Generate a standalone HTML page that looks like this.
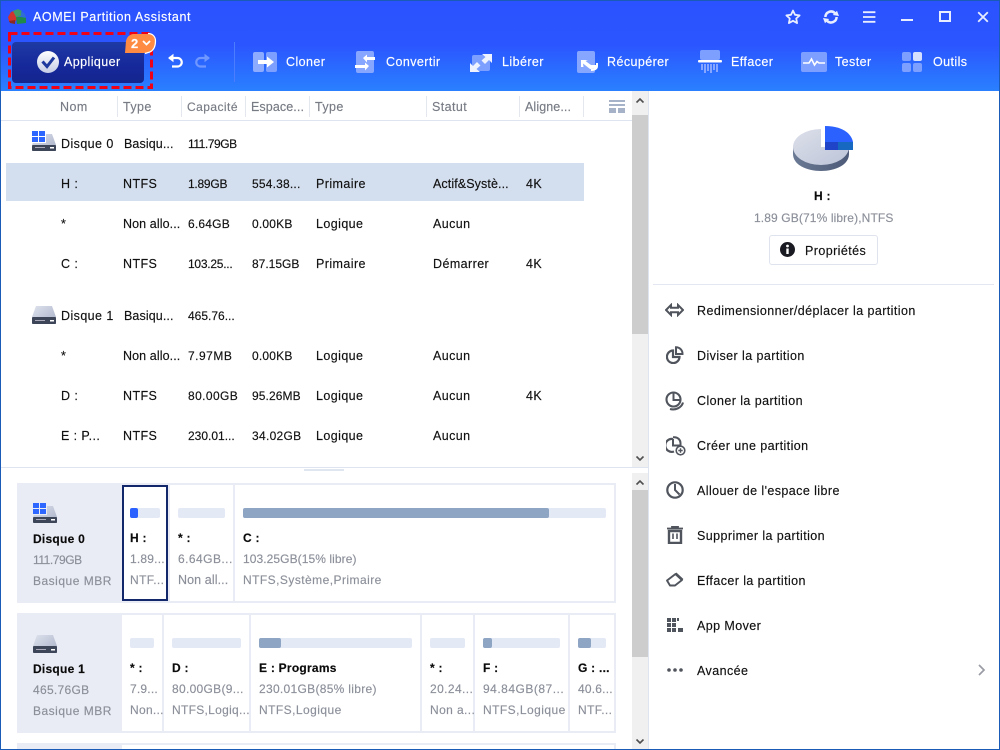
<!DOCTYPE html>
<html lang="fr"><head><meta charset="utf-8"><title>AOMEI Partition Assistant</title>
<style>
*{box-sizing:border-box}
html,body{margin:0;padding:0}
body{width:1000px;height:750px;overflow:hidden;position:relative;background:#fff;font-family:"Liberation Sans",sans-serif;font-size:12.5px;letter-spacing:.42px;color:#111;-webkit-text-stroke:.15px currentColor}
.a,.t,.b,.f,svg{position:absolute}
.t{white-space:nowrap;line-height:16px;height:16px}
.w{color:#fff}
.g{color:#8b8f99}
.h{color:#777b84}
.n{font-weight:bold;color:#0a0a0a;font-size:12px;letter-spacing:.25px}
.d{font-size:12px;letter-spacing:.2px}
.o{font-size:12px;letter-spacing:-.25px}
.e{letter-spacing:.1px}
.sep{position:absolute;top:96px;width:1px;height:21px;background:#e4e7ee}
.b{height:10px;background:#e3e9f5;border-radius:2px}
.f{height:10px;background:#8fa5c4;border-radius:2px}
.c{position:absolute;background:#fff}
.m{left:697px;color:#111}
</style></head><body>

<div class="a" style="left:0;top:0;width:1000px;height:91px;background:linear-gradient(#2b52ff 0,#2b56ff 50%,#2a80ff 100%)"></div>

<!-- logo -->
<svg style="left:7px;top:8px" width="20" height="18" viewBox="0 0 20 18"><path d="M1 9 4 4 9 2 11 9 8 14 2 13Z" fill="#d0342f"/><path d="M6 3 11 1 15 3 15 8 9 9Z" fill="#3f9a6a"/><path d="M9 9H19V15L10 16Z" fill="#1f8a4a"/><path d="M14 3 18 6 19 10 14 9Z" fill="#2e6fd0"/><path d="M2 13 8 12 8 16 3 15Z" fill="#8a2a20"/></svg>
<div class="t w" style="left:33px;top:9px;font-size:12.5px;letter-spacing:.6px">AOMEI Partition Assistant</div>

<!-- window controls -->
<svg style="left:785px;top:9px" width="16" height="16" viewBox="0 0 16 16"><path d="M8 1.600 10 5.800 14.600 6.400 11.200 9.500 12.100 14.100 8 11.800 3.900 14.100 4.800 9.500 1.400 6.400 6 5.800Z" fill="none" stroke="#e8eeff" stroke-width="1.800" stroke-linejoin="round"/></svg>
<svg style="left:823px;top:9px" width="16" height="16" viewBox="0 0 16 16"><path d="M2.400 8A5.600 5.600 0 0 1 12 4.200M13.600 8A5.600 5.600 0 0 1 4 11.800" fill="none" stroke="#e8eeff" stroke-width="2.500"/><path d="M9.800 6 16 7 14 1.800ZM6.200 10 0 9 2 14.200Z" fill="#e8eeff"/></svg>
<svg style="left:863px;top:11px" width="13" height="12" viewBox="0 0 13 12"><path d="M0 1.200H12.400M0 6H12.400M0 10.800H12.400" stroke="#e8eeff" stroke-width="1.800"/></svg>
<div class="a" style="left:901px;top:19px;width:12px;height:2px;background:#e8eeff"></div>
<div class="a" style="left:939px;top:11px;width:12px;height:11px;border:2px solid #e8eeff"></div>
<svg style="left:977px;top:11px" width="12" height="12" viewBox="0 0 12 12"><path d="M1.200 1.200 10.800 10.800M10.800 1.200 1.200 10.800" stroke="#e8eeff" stroke-width="1.800"/></svg>

<!-- apply -->
<div class="a" style="left:12px;top:42px;width:132px;height:41px;border-radius:4px;background:linear-gradient(#1e3aa4,#16289a 60%,#14258e)"></div>
<svg style="left:7px;top:31px" width="147" height="59" viewBox="0 0 147 59"><rect x="2.500" y="2.500" width="142" height="54" fill="none" stroke="#f00216" stroke-width="3" stroke-dasharray="8 4"/></svg>
<svg style="left:124px;top:32px" width="33" height="23" viewBox="0 0 33 23"><path d="M1 21 2 9C3 5 5 3 9 2H24C29 2 31 5 31 9 31 14 30 17 27 19L22 21Z" fill="#ff8b43" stroke="none"/><path d="M24 1.500C29 1.500 31.500 5 31.500 9 31.500 14 30 18 26 20L21 21.500" fill="none" stroke="#fff" stroke-width="1.200"/></svg>
<div class="t w" style="left:131px;top:36px;font-weight:bold;font-size:13px">2</div>
<svg style="left:142px;top:40px" width="9" height="6" viewBox="0 0 9 6"><path d="M1 1 4.500 4.500 8 1" fill="none" stroke="#fff" stroke-width="1.800"/></svg>
<svg style="left:36px;top:50px" width="24" height="24" viewBox="0 0 24 24"><defs><linearGradient id="ck" x1="0" y1="0" x2="0" y2="1"><stop offset="0" stop-color="#fff"/><stop offset="1" stop-color="#c5cde6"/></linearGradient></defs><circle cx="12" cy="12" r="11" fill="url(#ck)"/><path d="M6.500 11.500 11 16.500 18 7.500" fill="none" stroke="#1f3a9e" stroke-width="3"/></svg>
<div class="t w" style="left:64px;top:54px">Appliquer</div>

<!-- undo/redo -->
<svg style="left:167px;top:53px" width="18" height="16" viewBox="0 0 18 16"><path d="M2 5H10.500A4 4 0 0 1 10.500 13.500H5" fill="none" stroke="#fff" stroke-width="2.200"/><path d="M6.500 .8 1 5 6.500 9.200Z" fill="#fff"/></svg>
<svg style="left:193px;top:53px" width="18" height="16" viewBox="0 0 18 16"><path d="M16 5H7.500A4 4 0 0 0 7.500 13.500H13" fill="none" stroke="#6f97ff" stroke-width="2.200"/><path d="M11.500 .8 17 5 11.500 9.200Z" fill="#6f97ff"/></svg>
<div class="a" style="left:234px;top:42px;width:1px;height:40px;background:#4d7dff"></div>

<!-- toolbar icons -->
<svg style="left:253px;top:52px" width="24" height="20" viewBox="0 0 24 20"><rect width="11" height="20" rx="2" fill="#8dabff"/><rect x="13" width="11" height="20" rx="2" fill="#7d9fff"/><path d="M5 8H14V4.500L21 10 14 15.500V12H5Z" fill="#fff"/></svg>
<div class="t w" style="left:286px;top:54px">Cloner</div>
<svg style="left:355px;top:51px" width="22" height="22" viewBox="0 0 22 22"><rect x="1" y="0" width="18" height="22" rx="2" fill="#86a6ff"/><path d="M8 7 12 3.500V6H20V9H12V11.500ZM14 15 10 11.500V14H0V17H10V19.500Z" fill="#fff"/></svg>
<div class="t w" style="left:386px;top:54px">Convertir</div>
<svg style="left:470px;top:53px" width="22" height="20" viewBox="0 0 22 20"><rect x="2" y="2" width="18" height="16" rx="2" fill="#7d9fff"/><path d="M12 1H22V10L19 7 15 11 11.500 7.500 15.500 4ZM10 19H0V10L3 13 7 9 10.500 12.500 6.500 16Z" fill="#eef3ff"/></svg>
<div class="t w" style="left:502px;top:54px">Libérer</div>
<svg style="left:577px;top:51px" width="22" height="22" viewBox="0 0 22 22"><rect width="18" height="22" rx="2" fill="#86a6ff"/><path d="M4 9V16H6.500L6 12.500 13 18 20 17.500 21 14 14 14 8.500 10 11 9Z" fill="#fff"/><path d="M20 12V15C20 18 17 19 14 19" fill="none" stroke="#fff" stroke-width="2"/></svg>
<div class="t w" style="left:607px;top:54px">Récupérer</div>
<svg style="left:698px;top:50px" width="24" height="24" viewBox="0 0 24 24"><rect x="2" y="0" width="20" height="10" rx="2" fill="#7d9fff"/><rect x="0" y="10" width="24" height="2.500" rx="1" fill="#fff"/><path d="M4 14V20M7 14V23M10 14V21M13 14V23M16 14V20M19 14V22" stroke="#86a6ff" stroke-width="2"/></svg>
<div class="t w" style="left:731px;top:54px">Effacer</div>
<svg style="left:801px;top:52px" width="26" height="20" viewBox="0 0 26 20"><rect width="26" height="20" rx="2" fill="#7d9fff"/><path d="M2 11H8L10.500 7 13.500 13 16 9.500 18 11H24" fill="none" stroke="#fff" stroke-width="1.600"/></svg>
<div class="t w" style="left:835px;top:54px">Tester</div>
<svg style="left:902px;top:52px" width="20" height="20" viewBox="0 0 20 20"><rect width="9" height="9" rx="2" fill="#7d9fff"/><rect x="11" width="9" height="9" rx="2" fill="#d5e0ff"/><rect y="11" width="9" height="9" rx="2" fill="#7d9fff"/><rect x="11" y="11" width="9" height="9" rx="2" fill="#7d9fff"/></svg>
<div class="t w" style="left:933px;top:54px">Outils</div>

<!-- window border -->
<div class="a" style="left:0;top:0;width:1px;height:750px;background:#1a5bb8;z-index:9"></div>
<div class="a" style="left:999px;top:0;width:1px;height:750px;background:#1a5bb8;z-index:9"></div>
<div class="a" style="left:0;top:0;width:1000px;height:1px;background:#1a5bb8;z-index:9"></div>
<div class="a" style="left:0;top:749px;width:1000px;height:1px;background:#1a5bb8;z-index:9"></div>

<!-- list header -->
<div class="t h" style="left:60px;top:99px">Nom</div>
<div class="t h" style="left:123px;top:99px">Type</div>
<div class="t h" style="left:187px;top:99px;font-size:12px;letter-spacing:.45px">Capacité</div>
<div class="t h e" style="left:251px;top:99px">Espace...</div>
<div class="t h" style="left:315px;top:99px">Type</div>
<div class="t h" style="left:432px;top:99px">Statut</div>
<div class="t h e" style="left:525px;top:99px">Aligne...</div>
<div class="sep" style="left:117px"></div><div class="sep" style="left:181px"></div><div class="sep" style="left:245px"></div><div class="sep" style="left:309px"></div><div class="sep" style="left:426px"></div><div class="sep" style="left:519px"></div><div class="sep" style="left:583px"></div>
<div class="a" style="left:1px;top:120px;width:631px;height:1px;background:#dfe5f0"></div>
<svg style="left:609px;top:100px" width="16" height="13" viewBox="0 0 16 13"><path d="M0 0H16V2H0ZM0 4H16V6H0Z" fill="#a5b2c8"/><path d="M0 8H7V13H0ZM9 8H16V13H9Z" fill="#a5b2c8"/></svg>

<!-- rows -->
<div class="a" style="left:6px;top:163px;width:578px;height:38px;background:#d3deee"></div>

<svg style="left:32px;top:131px" width="24" height="20" viewBox="0 0 24 20"><defs><linearGradient id="dk" x1="0" y1="0" x2="1" y2="1"><stop offset="0" stop-color="#dfe3ee"/><stop offset="1" stop-color="#a8b0c6"/></linearGradient></defs><path d="M4 3H20L24 14V20H0V14Z" fill="url(#dk)"/><rect y="14" width="24" height="6" rx="1" fill="#3d4658"/><rect x="3" y="16" width="10" height="1" fill="#aab"/><rect x="18" y="16" width="4" height="1.500" fill="#fff"/><rect x="0" y="0" width="14" height="12" fill="#fff"/><path d="M0 0H6V5H0ZM7 0H13V5H7ZM0 6H6V11H0ZM7 6H13V11H7Z" fill="#2e67ff"/></svg>
<div class="t" style="left:61px;top:136px">Disque 0</div><div class="t e" style="left:124px;top:136px">Basiqu...</div><div class="t o" style="left:188px;top:136px;letter-spacing:-.45px">111.79GB</div>

<div class="t" style="left:61px;top:176px">H :</div><div class="t" style="left:123px;top:176px">NTFS</div><div class="t o" style="left:188px;top:176px">1.89GB</div><div class="t d" style="left:252px;top:176px">554.38...</div><div class="t" style="left:316px;top:176px">Primaire</div><div class="t e" style="left:433px;top:176px">Actif&amp;Systè...</div><div class="t" style="left:526px;top:176px">4K</div>

<div class="t" style="left:61px;top:216px">*</div><div class="t e" style="left:123px;top:216px">Non allo...</div><div class="t d" style="left:188px;top:216px">6.64GB</div><div class="t d" style="left:252px;top:216px">0.00KB</div><div class="t" style="left:316px;top:216px">Logique</div><div class="t" style="left:433px;top:216px">Aucun</div>

<div class="t" style="left:61px;top:256px">C :</div><div class="t" style="left:123px;top:256px">NTFS</div><div class="t o" style="left:188px;top:256px">103.25...</div><div class="t d" style="left:252px;top:256px;letter-spacing:0">87.15GB</div><div class="t" style="left:316px;top:256px">Primaire</div><div class="t" style="left:433px;top:256px">Démarrer</div><div class="t" style="left:526px;top:256px">4K</div>

<svg style="left:32px;top:306px" width="24" height="18" viewBox="0 0 24 18"><path d="M4 0H20L24 11V18H0V11Z" fill="url(#dk)"/><rect y="11" width="24" height="7" rx="1" fill="#3d4658"/><rect x="3" y="14" width="10" height="1" fill="#aab"/><rect x="18" y="14" width="4" height="1.500" fill="#fff"/></svg>
<div class="t" style="left:61px;top:308px">Disque 1</div><div class="t e" style="left:124px;top:308px">Basiqu...</div><div class="t d" style="left:188px;top:308px;letter-spacing:0">465.76...</div>

<div class="t" style="left:61px;top:348px">*</div><div class="t e" style="left:123px;top:348px">Non allo...</div><div class="t d" style="left:188px;top:348px;letter-spacing:.5px">7.97MB</div><div class="t d" style="left:252px;top:348px">0.00KB</div><div class="t" style="left:316px;top:348px">Logique</div><div class="t" style="left:433px;top:348px">Aucun</div>

<div class="t" style="left:61px;top:388px">D :</div><div class="t" style="left:123px;top:388px">NTFS</div><div class="t d" style="left:188px;top:388px;letter-spacing:.4px">80.00GB</div><div class="t d" style="left:252px;top:388px;letter-spacing:.1px">95.26MB</div><div class="t" style="left:316px;top:388px">Logique</div><div class="t" style="left:433px;top:388px">Aucun</div><div class="t" style="left:526px;top:388px">4K</div>

<div class="t" style="left:61px;top:428px">E : P...</div><div class="t" style="left:123px;top:428px">NTFS</div><div class="t d" style="left:188px;top:428px;letter-spacing:0">230.01...</div><div class="t d" style="left:252px;top:428px;letter-spacing:.3px">34.02GB</div><div class="t" style="left:316px;top:428px">Logique</div><div class="t" style="left:433px;top:428px">Aucun</div>

<!-- upper scrollbar -->
<div class="a" style="left:632px;top:91px;width:16px;height:376px;background:#f0f0f0"></div>
<div class="a" style="left:632px;top:115px;width:16px;height:219px;background:#cdcdcd"></div>
<svg style="left:635px;top:97px" width="10" height="7" viewBox="0 0 10 7"><path d="M1.500 5.500 5 2 8.500 5.500" fill="none" stroke="#505050" stroke-width="1.600"/></svg>
<svg style="left:635px;top:455px" width="10" height="7" viewBox="0 0 10 7"><path d="M1.500 1.500 5 5 8.500 1.500" fill="none" stroke="#505050" stroke-width="1.600"/></svg>
<div class="a" style="left:648px;top:91px;width:1px;height:659px;background:#dfe5f0"></div>

<!-- splitter -->
<div class="a" style="left:1px;top:467px;width:647px;height:1px;background:#dfe5f0"></div>
<div class="a" style="left:304px;top:469px;width:40px;height:2px;background:#dfe6f0"></div>

<!-- disk 0 card -->
<div class="a" style="left:17px;top:483px;width:599px;height:120px;background:#e9ecf4"></div>
<div class="c" style="left:122px;top:485px;width:46px;height:116px;border:2px solid #12286b"></div>
<div class="c" style="left:170px;top:485px;width:63px;height:116px"></div>
<div class="c" style="left:235px;top:485px;width:379px;height:116px"></div>
<svg style="left:33px;top:503px" width="24" height="20" viewBox="0 0 24 20"><path d="M4 3H20L24 14V20H0V14Z" fill="url(#dk)"/><rect y="14" width="24" height="6" rx="1" fill="#3d4658"/><rect x="3" y="16" width="10" height="1" fill="#aab"/><rect x="18" y="16" width="4" height="1.500" fill="#fff"/><rect x="0" y="0" width="14" height="12" fill="#e9ecf4"/><path d="M0 0H6V5H0ZM7 0H13V5H7ZM0 6H6V11H0ZM7 6H13V11H7Z" fill="#2e67ff"/></svg>
<div class="t n" style="left:33px;top:531px">Disque 0</div>
<div class="t g o" style="left:33px;top:552px;letter-spacing:-.45px">111.79GB</div>
<div class="t g" style="left:33px;top:573px;font-size:12px;letter-spacing:.5px">Basique MBR</div>
<div class="b" style="left:130px;top:508px;width:30px"></div><div class="f" style="left:130px;top:508px;width:8px;background:#2b62ff"></div>
<div class="t n" style="left:130px;top:530px">H :</div><div class="t g d" style="left:130px;top:551px">1.89...</div><div class="t g" style="left:130px;top:572px;font-size:12px;letter-spacing:.4px">NTF...</div>
<div class="b" style="left:178px;top:508px;width:47px"></div>
<div class="t n" style="left:178px;top:530px">* :</div><div class="t g d" style="left:178px;top:551px;letter-spacing:.45px">6.64GB...</div><div class="t g e" style="left:178px;top:572px">Non all...</div>
<div class="b" style="left:243px;top:508px;width:363px"></div><div class="f" style="left:243px;top:508px;width:306px"></div>
<div class="t n" style="left:243px;top:530px">C :</div><div class="t g d" style="left:243px;top:551px;letter-spacing:.08px">103.25GB(15% libre)</div><div class="t g" style="left:243px;top:572px;font-size:12px;letter-spacing:.45px">NTFS,Système,Primaire</div>

<!-- disk 1 card -->
<div class="a" style="left:17px;top:613px;width:599px;height:120px;background:#e9ecf4"></div>
<div class="c" style="left:122px;top:615px;width:40px;height:116px"></div>
<div class="c" style="left:164px;top:615px;width:85px;height:116px"></div>
<div class="c" style="left:251px;top:615px;width:169px;height:116px"></div>
<div class="c" style="left:422px;top:615px;width:51px;height:116px"></div>
<div class="c" style="left:475px;top:615px;width:93px;height:116px"></div>
<div class="c" style="left:570px;top:615px;width:44px;height:116px"></div>
<svg style="left:33px;top:635px" width="24" height="18" viewBox="0 0 24 18"><path d="M4 0H20L24 11V18H0V11Z" fill="url(#dk)"/><rect y="11" width="24" height="7" rx="1" fill="#3d4658"/><rect x="3" y="14" width="10" height="1" fill="#aab"/><rect x="18" y="14" width="4" height="1.500" fill="#fff"/></svg>
<div class="t n" style="left:33px;top:661px">Disque 1</div>
<div class="t g d" style="left:33px;top:682px;letter-spacing:.3px">465.76GB</div>
<div class="t g" style="left:33px;top:703px;font-size:12px;letter-spacing:.5px">Basique MBR</div>
<div class="b" style="left:130px;top:638px;width:24px"></div>
<div class="t n" style="left:130px;top:660px">* :</div><div class="t g d" style="left:130px;top:681px">7.9...</div><div class="t g" style="left:130px;top:702px;font-size:12px;letter-spacing:.3px">Non...</div>
<div class="b" style="left:172px;top:638px;width:69px"></div>
<div class="t n" style="left:172px;top:660px">D :</div><div class="t g d" style="left:172px;top:681px;letter-spacing:.3px">80.00GB(9...</div><div class="t g" style="left:172px;top:702px;font-size:12px;letter-spacing:.3px">NTFS,Logiq...</div>
<div class="b" style="left:259px;top:638px;width:153px"></div><div class="f" style="left:259px;top:638px;width:22px"></div>
<div class="t n" style="left:259px;top:660px">E : Programs</div><div class="t g d" style="left:259px;top:681px;letter-spacing:.3px">230.01GB(85% libre)</div><div class="t g" style="left:259px;top:702px;font-size:12px;letter-spacing:.45px">NTFS,Logique</div>
<div class="b" style="left:430px;top:638px;width:35px"></div>
<div class="t n" style="left:430px;top:660px">* :</div><div class="t g d" style="left:430px;top:681px;letter-spacing:.4px">20.24...</div><div class="t g" style="left:430px;top:702px;font-size:12px;letter-spacing:.4px">Non a...</div>
<div class="b" style="left:483px;top:638px;width:77px"></div><div class="f" style="left:483px;top:638px;width:9px"></div>
<div class="t n" style="left:483px;top:660px">F :</div><div class="t g d" style="left:483px;top:681px;letter-spacing:.5px">94.84GB(87...</div><div class="t g" style="left:483px;top:702px;font-size:12px;letter-spacing:.45px">NTFS,Logique</div>
<div class="b" style="left:578px;top:638px;width:28px"></div><div class="f" style="left:578px;top:638px;width:13px"></div>
<div class="t n" style="left:578px;top:660px">G : ...</div><div class="t g d" style="left:578px;top:681px">40.6...</div><div class="t g" style="left:578px;top:702px;font-size:12px;letter-spacing:.4px">NTF...</div>

<!-- disk 2 stub -->
<div class="a" style="left:17px;top:743px;width:599px;height:7px;background:#e9ecf4"></div>
<div class="c" style="left:122px;top:745px;width:492px;height:5px"></div>

<!-- lower scrollbar -->
<div class="a" style="left:632px;top:473px;width:16px;height:277px;background:#f0f0f0"></div>
<div class="a" style="left:632px;top:490px;width:16px;height:167px;background:#cdcdcd"></div>
<svg style="left:635px;top:479px" width="10" height="7" viewBox="0 0 10 7"><path d="M1.500 5.500 5 2 8.500 5.500" fill="none" stroke="#505050" stroke-width="1.600"/></svg>
<svg style="left:635px;top:738px" width="10" height="7" viewBox="0 0 10 7"><path d="M1.500 1.500 5 5 8.500 1.500" fill="none" stroke="#505050" stroke-width="1.600"/></svg>

<!-- pie -->
<svg style="left:790px;top:124px" width="66" height="50" viewBox="0 0 66 50"><defs><linearGradient id="pt" x1="0" y1="0" x2="1" y2="1"><stop offset="0" stop-color="#dde0ea"/><stop offset="1" stop-color="#bcc4d8"/></linearGradient><linearGradient id="ps" x1="0" y1="0" x2="1" y2="0"><stop offset="0" stop-color="#6b7a94"/><stop offset="1" stop-color="#4d5a78"/></linearGradient></defs><path d="M3 23V30C3 41 17 47 31 47S59 41 59 30V23Z" fill="url(#ps)"/><ellipse cx="31" cy="23" rx="28" ry="18" fill="url(#pt)"/><rect x="31" y="0" width="35" height="23" fill="#fff"/><path d="M35 2C50 2 61 8 63 18V26H35Z" fill="#2b62ff"/><rect x="35" y="18" width="28" height="8" fill="#1f44c8"/><rect x="48" y="18" width="15" height="8" fill="#1668c0"/></svg>

<div class="t n" style="left:814px;top:188px">H :</div>
<div class="t g d" style="left:754px;top:210px;letter-spacing:.12px">1.89 GB(71% libre),NTFS</div>
<div class="a" style="left:769px;top:235px;width:109px;height:30px;border:1px solid #dfe3ee;border-radius:3px"></div>
<svg style="left:780px;top:242px" width="15" height="15" viewBox="0 0 15 15"><circle cx="7.500" cy="7.500" r="7.500" fill="#1a1a22"/><rect x="6.300" y="6.500" width="2.400" height="5.500" fill="#fff"/><circle cx="7.500" cy="4" r="1.400" fill="#fff"/></svg>
<div class="t" style="left:805px;top:243px">Propriétés</div>
<div class="a" style="left:653px;top:284px;width:341px;height:1px;background:#e2e7f1"></div>

<!-- menu -->
<svg style="left:665px;top:303px" width="19" height="14" viewBox="0 0 19 14"><path d="M6 2 1 7 6 12V9.300H13V12L18 7 13 2V4.700H6Z" fill="none" stroke="#50545c" stroke-width="2"/></svg>
<div class="t m" style="top:303px">Redimensionner/déplacer la partition</div>

<svg style="left:666px;top:346px" width="18" height="18" viewBox="0 0 18 18"><path d="M7 4.500A6.300 6.300 0 1 0 13.500 11H7Z" fill="none" stroke="#50545c" stroke-width="2.200"/><path d="M10 1.200A6.500 6.500 0 0 1 16.500 8H10Z" fill="none" stroke="#50545c" stroke-width="2"/></svg>
<div class="t m" style="top:348px">Diviser la partition</div>

<svg style="left:665px;top:391px" width="20" height="20" viewBox="0 0 20 20"><circle cx="8.500" cy="8.500" r="7" fill="none" stroke="#50545c" stroke-width="2.100"/><path d="M8.500 2V9H15" fill="none" stroke="#50545c" stroke-width="2"/><path d="M5 18C10 19.500 16.500 17 18 11.500" fill="none" stroke="#50545c" stroke-width="2.100"/></svg>
<div class="t m" style="top:393px">Cloner la partition</div>

<svg style="left:666px;top:436px" width="20" height="20" viewBox="0 0 20 20"><path d="M7 3A6.500 6.500 0 1 0 8 15.500" fill="none" stroke="#50545c" stroke-width="2.200"/><path d="M7 3V9.500H14.500V7A6 6 0 0 0 8.500 1.200H7" fill="none" stroke="#50545c" stroke-width="2"/><circle cx="14.500" cy="14.500" r="4.300" fill="#fff" stroke="#50545c" stroke-width="1.600"/><path d="M12.300 14.500H16.700M14.500 12.300V16.700" stroke="#50545c" stroke-width="1.400"/></svg>
<div class="t m" style="top:438px">Créer une partition</div>

<svg style="left:666px;top:481px" width="18" height="18" viewBox="0 0 18 18"><circle cx="9" cy="9" r="7.700" fill="none" stroke="#50545c" stroke-width="2.200"/><path d="M9 3V9L13.500 13.500" fill="none" stroke="#50545c" stroke-width="2"/></svg>
<div class="t m" style="top:483px">Allouer de l'espace libre</div>

<svg style="left:667px;top:526px" width="16" height="18" viewBox="0 0 16 18"><path d="M0 2.500H16M5 2V.8H11V2" fill="none" stroke="#50545c" stroke-width="1.800"/><path d="M2 5H14V17H2Z" fill="none" stroke="#50545c" stroke-width="2.400"/><path d="M6 7.500V13M10 7.500V13" stroke="#50545c" stroke-width="1.600"/></svg>
<div class="t m" style="top:528px">Supprimer la partition</div>

<svg style="left:665px;top:572px" width="19" height="16" viewBox="0 0 19 16"><path d="M2 8.500 10.500 2 17 8 10 13.500H5Z" fill="none" stroke="#50545c" stroke-width="1.900" stroke-linejoin="round"/><path d="M10.500 1.500 17.500 8" stroke="#50545c" stroke-width="2.600"/></svg>
<div class="t m" style="top:573px">Effacer la partition</div>

<svg style="left:667px;top:618px" width="17" height="15" viewBox="0 0 17 15"><path d="M0 0H4V4H0ZM5 0H9V4H5ZM0 5H4V9H0ZM5 5H9V9H5ZM0 10H4V14H0ZM5 10H9V14H5ZM11 10H16V14H11ZM10 0H12V3H10Z" fill="#50545c"/></svg>
<div class="t m" style="top:618px">App Mover</div>

<svg style="left:667px;top:668px" width="16" height="4" viewBox="0 0 16 4"><circle cx="2" cy="2" r="1.800" fill="#50545c"/><circle cx="8" cy="2" r="1.800" fill="#50545c"/><circle cx="14" cy="2" r="1.800" fill="#50545c"/></svg>
<div class="t m" style="top:663px">Avancée</div>
<svg style="left:977px;top:664px" width="9" height="12" viewBox="0 0 9 12"><path d="M2 1 7 6 2 11" fill="none" stroke="#999ca4" stroke-width="1.700"/></svg>

</body></html>
